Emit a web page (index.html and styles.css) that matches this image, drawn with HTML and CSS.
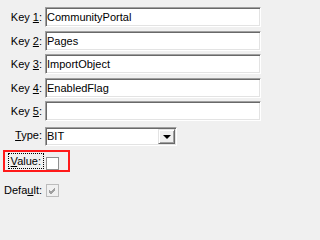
FILE: index.html
```html
<!DOCTYPE html>
<html>
<head>
<meta charset="utf-8">
<link rel="stylesheet" href="styles.css">
</head>
<body>
<div class="form">
  <label class="lbl"><span>Key <u>1</u>:</span></label><div class="field"><span class="txt">CommunityPortal</span></div>
  <label class="lbl"><span>Key <u>2</u>:</span></label><div class="field"><span class="txt">Pages</span></div>
  <label class="lbl"><span>Key <u>3</u>:</span></label><div class="field"><span class="txt">ImportObject</span></div>
  <label class="lbl"><span>Key <u>4</u>:</span></label><div class="field"><span class="txt">EnabledFlag</span></div>
  <label class="lbl"><span>Key <u>5</u>:</span></label><div class="field"><span class="txt"></span></div>
  <label class="lbl"><span><u>T</u>ype:</span></label>
  <div class="combo"><span class="txt">BIT</span><span class="btn"><span class="tri"></span></span></div>
  <label class="lbl value"><span class="focus"><u>V</u>alue:</span></label>
  <div class="checkrow valuecheck"><span class="check"></span></div>
  <label class="lbl deflbl"><span>Defa<u>u</u>lt:</span></label>
  <div class="checkrow defcheck"><span class="check disabled"><svg width="9" height="9" viewBox="0 0 9 9"><path d="M1 4 L3 6 L7 2 M1 5 L3 7 L7 3 M1 6 L3 8 L7 4" stroke="#a0a0a0" stroke-width="1" fill="none"/></svg></span></div>
  <span class="hl"></span>
</div>
</body>
</html>
```

FILE: styles.css
```css
html, body {
  margin: 0;
  padding: 0;
  background: #f0f0f0;
}
body {
  font-family: "Liberation Sans", Arial, sans-serif;
  font-size: 11px;
  color: #000;
  width: 267px;
  height: 200px;
  overflow: hidden;
}
.form {
  position: relative;
  display: grid;
  grid-template-columns: 42px 216px;
  column-gap: 3px;
  row-gap: 3.5px;
  padding-top: 7px;
  grid-auto-rows: 20px;
}
.lbl {
  display: flex;
  align-items: center;
  justify-content: flex-end;
  white-space: nowrap;
}
.field {
  box-sizing: border-box;
  height: 20px;
  background: #fff;
  border-style: solid;
  border-width: 1px;
  border-color: #a0a0a0 #fff #fff #a0a0a0;
  box-shadow: inset 1px 1px 0 #696969, inset -1px -1px 0 #e3e3e3;
  display: flex;
  align-items: center;
  padding-left: 1px;
}
.combo {
  box-sizing: border-box;
  width: 132px;
  height: 19px;
  margin-top: 2px;
  background: #fff;
  border-style: solid;
  border-width: 1px;
  border-color: #a0a0a0 #fff #fff #a0a0a0;
  box-shadow: inset 1px 1px 0 #696969, inset -1px -1px 0 #e3e3e3;
  display: flex;
  align-items: center;
  padding-left: 1px;
  padding-right: 1px;
}
.combo .txt { flex: 1; }
.btn {
  box-sizing: border-box;
  width: 17px;
  height: 15px;
  background: #f0f0f0;
  border-style: solid;
  border-width: 1px;
  border-color: #e3e3e3 #696969 #696969 #e3e3e3;
  box-shadow: inset 1px 1px 0 #fff, inset -1px -1px 0 #a0a0a0;
  display: flex;
  align-items: center;
  justify-content: center;
}
.tri {
  width: 0;
  height: 0;
  border-left: 4px solid transparent;
  border-right: 4px solid transparent;
  border-top: 4px solid #000;
  margin-top: 1px;
}
.value {
  align-self: start;
  height: 20px;
  margin-top: 3px;
}
.focus {
  outline: 1px dotted #000;
  outline-offset: 1px;
  padding: 0 1px;
}
.valuecheck {
  margin-top: 9px;
}
.deflbl {
  align-self: start;
  height: 20px;
  margin-top: 8px;
}
.defcheck {
  margin-top: 12px;
}
.hl {
  position: absolute;
  left: 3px;
  top: 150px;
  width: 63px;
  height: 18px;
  border: 2px solid #ff1a1a;
}
.checkrow {
  align-self: start;
  display: flex;
  align-items: flex-start;
  padding-left: 1px;
}
.check {
  box-sizing: border-box;
  width: 13px;
  height: 13px;
  background: #fff;
  border: 1px solid #8e8f8f;
  display: flex;
  align-items: center;
  justify-content: center;
}
.check.disabled {
  background: #f0f0f0;
  border-color: #bcbcbc;
}
```
